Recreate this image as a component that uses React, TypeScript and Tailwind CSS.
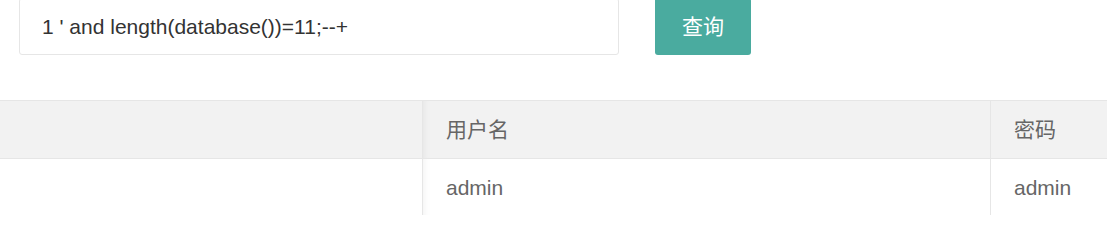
const latin = "font-['Liberation_Sans','Noto_Sans_CJK_SC',sans-serif]";

const rows = [{ username: 'admin', password: 'admin' }];

export default function App() {
  return (
    <div className={`h-[215px] w-full overflow-hidden bg-white ${latin}`}>
      <div className="-mt-[2px] flex items-center pl-[19px]">
        <input
          readOnly
          value="1 ' and length(database())=11;--+"
          className="h-[57px] w-[600px] rounded-[3px] border border-[#e6e6e6] bg-white pl-[22px] text-[21px] text-[#333] outline-none"
        />
        <button className="ml-[36px] h-[57px] w-[96px] rounded-[3px] bg-[#4aab9f] text-[21px] text-white">
          查询
        </button>
      </div>

      <div className="mt-[45px] w-[1140px] border-t border-[#e6e6e6] text-[21px] text-[#666]">
        <div className="grid grid-cols-[423px_568px_1fr] border-b border-[#e6e6e6] bg-[#f2f2f2]">
          <div className="h-[57px] border-r border-[#e6e6e6]" />
          <div className="flex h-[57px] items-center border-r border-[#e6e6e6] pl-[23px] shadow-[inset_8px_0_8px_-8px_rgba(0,0,0,0.07)]">
            用户名
          </div>
          <div className="flex h-[57px] items-center pl-[23px]">密码</div>
        </div>
        {rows.map((r, i) => (
          <div key={i} className="grid grid-cols-[423px_568px_1fr] border-b border-[#e6e6e6]">
            <div className="h-[57px] border-r border-[#e6e6e6]" />
            <div className="flex h-[57px] items-center border-r border-[#e6e6e6] pl-[23px] shadow-[inset_8px_0_8px_-8px_rgba(0,0,0,0.07)]">
              {r.username}
            </div>
            <div className="flex h-[57px] items-center pl-[23px]">{r.password}</div>
          </div>
        ))}
      </div>
    </div>
  );
}
